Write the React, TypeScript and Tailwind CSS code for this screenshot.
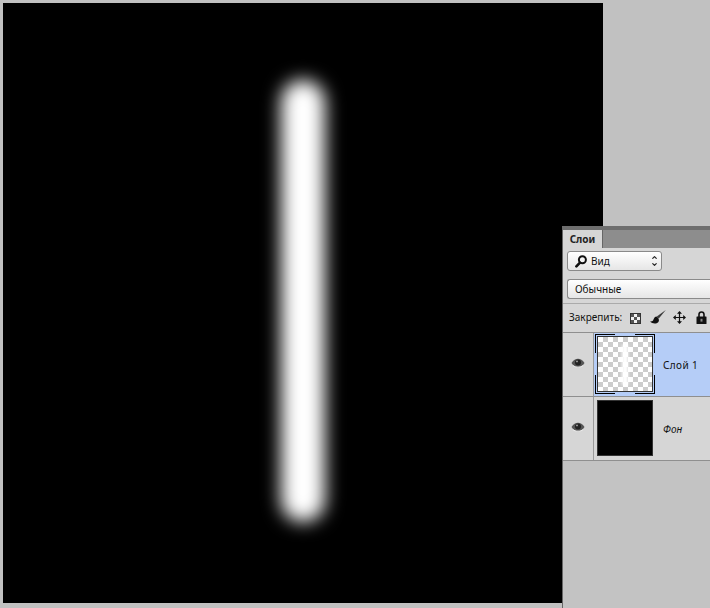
import { ChevronDown, ChevronUp } from "lucide-react";

const EyeIcon = () => (
  <svg width="14" height="10" viewBox="0 0 14 10">
    <path d="M0.5 5C2.5 1.8 4.6 0.8 7 0.8S11.5 1.8 13.5 5C11.5 8 9.4 9.2 7 9.2S2.5 8 0.5 5Z" fill="#555" />
    <circle cx="7" cy="4.4" r="3" fill="#222" />
    <circle cx="6" cy="3.4" r="0.9" fill="#aaa" />
    <path d="M2 7.6C4 9.6 10 9.6 12 7.6" stroke="#f0f0f0" strokeWidth="0.9" fill="none" />
  </svg>
);

const SearchIcon = () => (
  <svg width="12" height="13" viewBox="0 0 12 13">
    <circle cx="7.4" cy="4.8" r="3.5" fill="none" stroke="#111" strokeWidth="2" />
    <path d="M5 7.6L1.4 11.4" stroke="#111" strokeWidth="2.6" strokeLinecap="round" />
  </svg>
);

const CheckerIcon = () => (
  <svg width="11" height="11" viewBox="0 0 11 11">
    <rect x="0.5" y="0.5" width="10" height="10" fill="#f2f2f2" stroke="#333" />
    <path d="M1 1h3v3H1zM7 1h3v3H7zM4 4h3v3H4zM1 7h3v3H1zM7 7h3v3H7z" fill="#555" />
  </svg>
);

const BrushIcon = () => (
  <svg width="16" height="14" viewBox="0 0 16 14">
    <path d="M15.8 0L6.8 6.4L8.8 8.4Z" fill="#3a3a3a" />
    <path d="M6.4 6.6C4 6.8 4.2 9 3.2 10.2C2.4 11.2 1.2 11.6 0 11.6C2 13.8 6.4 14.2 8.2 12.2C9.6 10.6 9 8 6.4 6.6Z" fill="#111" />
  </svg>
);

const MoveIcon = () => (
  <svg width="13" height="13" viewBox="0 0 13 13">
    <path d="M6.5 1V12M1 6.5H12" stroke="#111" strokeWidth="1.2" />
    <path d="M6.5 0L9 2.8H4ZM6.5 13L4 10.2H9ZM0 6.5L2.8 4V9ZM13 6.5L10.2 9V4Z" fill="#111" />
  </svg>
);

const LockIcon = () => (
  <svg width="11" height="13" viewBox="0 0 11 13">
    <path d="M3 6V3.6C3 2 4 1 5.5 1S8 2 8 3.6V6" fill="none" stroke="#111" strokeWidth="1.6" />
    <rect x="0.5" y="5.5" width="10" height="7.5" rx="0.5" fill="#111" />
    <rect x="4.5" y="7.8" width="2" height="2.8" fill="#888" />
  </svg>
);

const Corner = ({ className }: { className: string }) => <div className={`absolute w-[20px] h-[19px] border-black ${className}`} />;

const LayerRow = ({ name, selected, children }: { name: string; selected?: boolean; children: React.ReactNode }) => (
  <div className="flex h-[64px] border-b border-[#8f8f8f] bg-[#d6d6d6]">
    <div className="w-[31px] flex items-center justify-center border-r border-[#9a9a9a]">
      <div className="mt-[-3px]">
        <EyeIcon />
      </div>
    </div>
    <div className={`flex-1 flex items-start pl-[3px] pt-[3px] ${selected ? "bg-[#b5cdf7]" : ""}`}>
      {children}
      <span className={`ml-[10px] mt-[22px] text-[10px] text-[#111] ${selected ? "tracking-[0.4px]" : "italic"}`}>{name}</span>
    </div>
  </div>
);

const App = () => {
  return (
    <div className="relative w-[710px] h-[608px] overflow-hidden bg-[#c1c1c1] font-['Noto_Sans',sans-serif]">
      {/* Canvas */}
      <div className="ml-[3px] mt-[3px] w-[600px] h-[600px] inline-flex items-center justify-center bg-black overflow-hidden">
        <div className="w-[44px] h-[442px] mb-[5px] rounded-full bg-white blur-[9px]" />
      </div>

      {/* Layers panel */}
      <div className="absolute left-[562px] top-[226px] w-[148px] h-[382px] flex flex-col bg-[#c3c3c3] border-l border-[#666] border-t-[4px] border-t-[#6e6e6e]">
        <div className="flex h-[18px] bg-[#8d8d8d] shrink-0">
          <div className="w-[40px] bg-[#d6d6d6] border-r border-[#666] flex items-center justify-center text-[10px] font-bold text-[#222]">Слои</div>
        </div>
        <div className="bg-[#d6d6d6] shrink-0">
          <div className="h-[56px] flex flex-col border-b border-[#aaa]">
            <div className="ml-[4px] mt-[3px] w-[95px] h-[20px] flex items-center pl-[7px] pr-[3px] rounded-[3px] border border-[#8a8a8a] bg-gradient-to-b from-white to-[#e6e6e6] text-[10px] text-[#111]">
              <SearchIcon />
              <span className="ml-[4px] flex-1">Вид</span>
              <div className="flex flex-col items-center">
                <ChevronUp size={7} strokeWidth={4} className="text-[#222]" />
                <ChevronDown size={7} strokeWidth={4} className="text-[#222]" />
              </div>
            </div>
            <div className="ml-[4px] mt-[8px] h-[20px] flex items-center pl-[7px] rounded-l-[3px] border border-r-0 border-[#8a8a8a] bg-gradient-to-b from-white to-[#e6e6e6] text-[10px] text-[#111]">Обычные</div>
          </div>
          <div className="h-[29px] flex items-center border-b border-[#8f8f8f] pl-[6px] text-[10px] text-[#111]">
            <span className="w-[61px] mt-[-2px]">Закрепить:</span>
            <CheckerIcon />
            <div className="ml-[9px] mt-[-2px]">
              <BrushIcon />
            </div>
            <div className="ml-[7px] mt-[-2px]">
              <MoveIcon />
            </div>
            <div className="ml-[10px] mt-[-1px]">
              <LockIcon />
            </div>
          </div>
        </div>

        <LayerRow name="Слой 1" selected>
          <div className="relative shrink-0 w-[56px] h-[56px] border border-[#333] bg-[repeating-conic-gradient(#cccccc_0_25%,#ffffff_0_50%)] bg-[length:10px_10px]">
            <div className="absolute left-[24px] top-[8px] w-[6px] h-[40px] bg-white blur-[1.5px]" />
            <Corner className="left-[-3px] top-[-3px] border-l border-t" />
            <Corner className="right-[-3px] top-[-3px] border-r border-t" />
            <Corner className="left-[-3px] bottom-[-3px] border-l border-b" />
            <Corner className="right-[-3px] bottom-[-3px] border-r border-b" />
          </div>
        </LayerRow>
        <LayerRow name="Фон">
          <div className="shrink-0 w-[56px] h-[56px] border border-[#333] bg-black" />
        </LayerRow>
      </div>
    </div>
  );
};

export default App;
